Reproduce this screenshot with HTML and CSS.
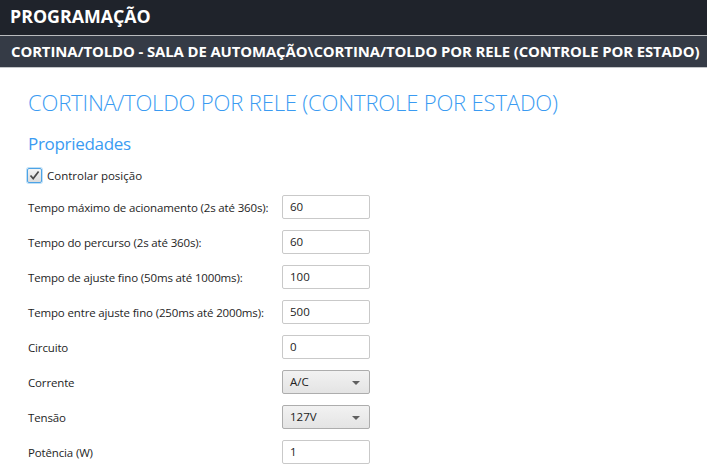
FILE: index.html
```html
<!DOCTYPE html>
<html lang="pt">
<head>
<meta charset="utf-8">
<title>Programação</title>
<link rel="stylesheet" href="styles.css">
</head>
<body>
<header class="topbar">PROGRAMAÇÃO</header>
<div class="pathbar">CORTINA/TOLDO - SALA DE AUTOMAÇÃO\CORTINA/TOLDO POR RELE (CONTROLE POR ESTADO)</div>
<main class="content">
  <h1 class="title">CORTINA/TOLDO POR RELE (CONTROLE POR ESTADO)</h1>
  <h2 class="section">Propriedades</h2>
  <label class="check">
    <span class="box"><svg width="11" height="11" viewBox="0 0 11 11"><path d="M1.5 5.5 L4.2 8.6 L9.6 1.6" fill="none" stroke="#4a4a4a" stroke-width="1.7"/></svg></span>
    <span>Controlar posição</span>
  </label>
  <div class="form">
    <div class="row"><span class="lbl">Tempo máximo de acionamento (2s até 360s):</span><span class="input">60</span></div>
    <div class="row"><span class="lbl">Tempo do percurso (2s até 360s):</span><span class="input">60</span></div>
    <div class="row"><span class="lbl">Tempo de ajuste fino (50ms até 1000ms):</span><span class="input">100</span></div>
    <div class="row"><span class="lbl">Tempo entre ajuste fino (250ms até 2000ms):</span><span class="input">500</span></div>
    <div class="row"><span class="lbl">Circuito</span><span class="input">0</span></div>
    <div class="row"><span class="lbl">Corrente</span><span class="combo">A/C<span class="arrow"></span></span></div>
    <div class="row"><span class="lbl">Tensão</span><span class="combo">127V<span class="arrow"></span></span></div>
    <div class="row"><span class="lbl">Potência (W)</span><span class="input">1</span></div>
  </div>
</main>
</body>
</html>
```
FILE: styles.css
```css
html, body { margin: 0; padding: 0; background: #fff; }
body { font-family: "Open Sans", "Noto Sans", sans-serif; color: #1e1e1e; width: 707px; height: 470px; overflow: hidden; }
.topbar {
  height: 35px; background: #1f232b; color: #fff; font-weight: 700; font-size: 17.8px;
  padding-left: 10px; line-height: 32px; border-bottom: 1px solid #b9bbbe; box-sizing: content-box;
}
.pathbar {
  height: 31px; background: #353b46; color: #fff; font-weight: 700; font-size: 14.9px;
  padding-left: 11px; line-height: 31px; border-bottom: 1px solid #c4c6c9; white-space: nowrap;
  letter-spacing: -0.1px;
}
.content { padding: 0 0 0 28px; }
.title { margin: 20px 0 0; font-size: 22.1px; font-weight: 300; color: #3a9bf2; line-height: 28px; letter-spacing: -0.2px; }
.section { margin: 17px 0 0; font-size: 17px; font-weight: 400; color: #3a9bf2; line-height: 22px; letter-spacing: -0.3px; }
.check { display: flex; align-items: center; gap: 5px; margin: 12px 0 0 -1px; font-size: 11.5px; height: 17px; }
.box {
  width: 13px; height: 13px; border: 1px solid #4da3e6; border-radius: 2px;
  background: linear-gradient(#f4f4f4, #dcdcdc); display: flex; align-items: center; justify-content: center;
  box-shadow: 0 0 0 1px #bfe0f7;
}
.form { display: flex; flex-direction: column; gap: 11px; margin-top: 11px; }
.row { display: flex; align-items: center; height: 24px; font-size: 11.5px; }
.lbl { width: 254px; white-space: nowrap; letter-spacing: -0.15px; }
.input, .combo {
  width: 88px; height: 24px; box-sizing: border-box; border: 1px solid #c9c9c9; border-radius: 2px;
  padding-left: 7px; line-height: 22px; font-size: 11.5px; color: #222;
}
.combo { position: relative; border-color: #adadad; background: linear-gradient(#f2f2f2, #e4e4e4); }
.arrow {
  position: absolute; right: 9px; top: 10px; width: 0; height: 0;
  border-left: 4px solid transparent; border-right: 4px solid transparent; border-top: 4px solid #606060;
}
```
